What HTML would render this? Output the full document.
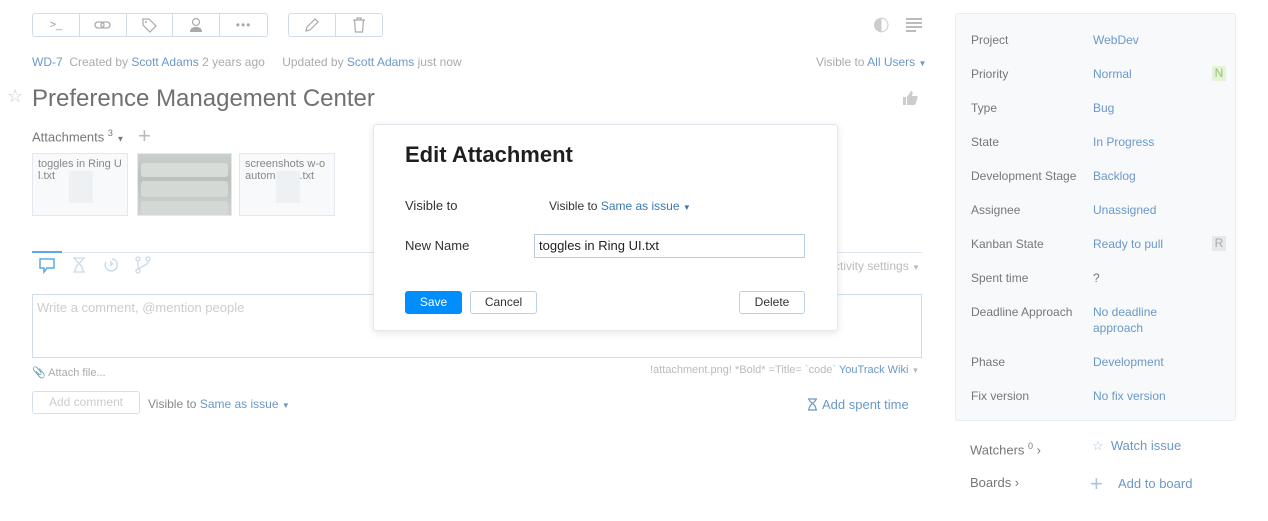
<!DOCTYPE html>
<html><head><meta charset="utf-8"><style>
*{box-sizing:border-box;margin:0;padding:0}
body{width:1268px;height:521px;background:#fff;font-family:"Liberation Sans",sans-serif;font-size:12px;color:#737373;position:relative;overflow:hidden}
.a{position:absolute;white-space:nowrap}
.blue{color:#6b98c8}
.lt{color:#aaa}
.grp{position:absolute;top:13px;height:24px;border:1px solid #cfdceb;border-radius:3px;display:flex}
.grp div{width:47px;height:22px;border-right:1px solid #cfdceb;display:flex;align-items:center;justify-content:center}
.grp div:last-child{border-right:none}
.thumb{position:absolute;top:153px;height:63px;border:1px solid #e3e8ee;background:#f7f9fb;font-size:11px;color:#888;padding:4px 5px;line-height:12px;white-space:normal}
.side{position:absolute;left:955px;top:13px;width:281px;height:408px;background:#f7f9fb;border:1px solid #e6ecf2;border-radius:3px}
.btn{position:absolute;height:23px;border:1px solid #bcd0e4;border-radius:3px;background:#fff;text-align:center;line-height:21px;color:#333}
.l{position:absolute;left:971px;color:#777;white-space:nowrap}
.v{position:absolute;left:1093px;color:#6b98c8;white-space:nowrap;line-height:16px}
</style></head><body>
<div class="grp" style="left:32px;width:236px">
<div><span style="color:#999;font-size:11px">&gt;_</span></div>
<div><svg width="18" height="12" viewBox="0 0 18 12"><rect x="1" y="3" width="9" height="6" rx="3" fill="none" stroke="#aaa" stroke-width="1.3"/><rect x="7" y="3" width="9" height="6" rx="3" fill="none" stroke="#aaa" stroke-width="1.3"/></svg></div>
<div><svg width="16" height="16" viewBox="0 0 16 16"><path d="M2 2h6l7 7-6 6-7-7z" fill="none" stroke="#aaa" stroke-width="1.2"/><circle cx="5" cy="5" r="1" fill="#aaa"/></svg></div>
<div><svg width="14" height="16" viewBox="0 0 14 16"><circle cx="7" cy="5" r="3.5" fill="none" stroke="#aaa" stroke-width="1.2"/><path d="M1 15c0-4 3-5 6-5s6 1 6 5z" fill="#aaa"/></svg></div>
<div><span style="color:#aaa;letter-spacing:1px;font-size:12px">•••</span></div>
</div>
<div class="grp" style="left:288px;width:95px">
<div><svg width="16" height="16" viewBox="0 0 16 16"><path d="M2 14l1-4 8-8 3 3-8 8z" fill="none" stroke="#aaa" stroke-width="1.2"/></svg></div>
<div><svg width="14" height="16" viewBox="0 0 14 16"><path d="M1 3h12M5 3V1h4v2M2.5 3l1 12h7l1-12" fill="none" stroke="#aaa" stroke-width="1.2"/></svg></div>
</div>
<svg class="a" style="left:873px;top:17px" width="16" height="16" viewBox="0 0 16 16"><circle cx="8" cy="8" r="7" fill="#ccc"/><path d="M8 1a7 7 0 0 1 0 14z" fill="#fff" stroke="#ccc"/></svg>
<svg class="a" style="left:906px;top:18px" width="16" height="14"><g fill="#bbb"><rect y="0" width="16" height="2"/><rect y="4" width="16" height="2"/><rect y="8" width="16" height="2"/><rect y="12" width="10" height="2"/></g></svg>

<div class="a" style="left:32px;top:55px;font-size:12px"><span class="blue">WD-7</span> <span class="lt">&nbsp;Created by</span> <span class="blue">Scott Adams</span> <span class="lt">2 years ago</span> <span class="lt" style="margin-left:14px">Updated by</span> <span class="blue">Scott Adams</span> <span class="lt">just now</span></div>
<div class="a" style="left:816px;top:55px"><span class="lt">Visible to</span> <span class="blue">All Users <span style="font-size:8px">▼</span></span></div>
<div class="a" style="left:7px;top:86px;font-size:18px;color:#ccc">☆</div>
<div class="a" style="left:32px;top:85px;font-size:24px;color:#707070">Preference Management Center</div>
<svg class="a" style="left:902px;top:90px" width="16" height="16" viewBox="0 0 16 16"><rect x="1" y="7" width="3" height="8" fill="#ccc"/><path d="M5 7l4-6c1 0 2 1 1.5 3L10 6h4.5c1 0 1.5 1 1 2l-2 6c-.3.7-1 1-1.5 1H5z" fill="#ccc"/></svg>
<div class="a" style="left:32px;top:128px;font-size:13px;color:#777">Attachments <sup style="font-size:9px">3</sup> <span style="font-size:8px">▼</span></div>
<div class="a" style="left:138px;top:123px;font-size:22px;color:#bbb">+</div>
<div class="thumb" style="left:32px;width:96px">toggles in Ring U l.txt<div style="position:absolute;left:36px;top:17px;width:24px;height:32px;background:#eef1f4"></div></div>
<div class="thumb" style="left:137px;width:95px;background:linear-gradient(180deg,#c9d0cb,#b9c2bc 40%,#cfd3d0);padding:0"><div style="margin:9px 3px 0;height:14px;background:#d8dcd9;border-radius:3px"></div><div style="margin:4px 3px 0;height:16px;background:#d5d9d6;border-radius:3px"></div><div style="margin:4px 3px 0;height:14px;background:#d5d9d6;border-radius:3px"></div></div>
<div class="thumb" style="left:239px;width:96px">screenshots w-o automation.txt<div style="position:absolute;left:36px;top:17px;width:24px;height:32px;background:#eef1f4"></div></div>

<div class="a" style="left:32px;top:252px;width:890px;height:1px;background:#dce6f0"></div>
<div class="a" style="left:32px;top:251px;width:30px;height:2px;background:#5aa9e6"></div>
<svg class="a" style="left:38px;top:257px" width="18" height="17" viewBox="0 0 18 17"><path d="M2 2h14v9H9l-3 4v-4H2z" fill="none" stroke="#5aa9e6" stroke-width="1.5"/></svg>
<svg class="a" style="left:72px;top:257px" width="14" height="16" viewBox="0 0 14 16"><path d="M1 1h12M1 15h12M3 1c0 5 8 5 8 14M11 1c0 5-8 5-8 14" fill="none" stroke="#c8daea" stroke-width="1.3"/></svg>
<svg class="a" style="left:103px;top:257px" width="16" height="16" viewBox="0 0 16 16"><path d="M9 2a6 6 0 1 1-6 3" fill="none" stroke="#c8daea" stroke-width="1.4"/><path d="M8 4v4l2-2" fill="none" stroke="#c8daea" stroke-width="1.3"/></svg>
<svg class="a" style="left:135px;top:256px" width="16" height="18" viewBox="0 0 16 18"><circle cx="3" cy="3" r="2" fill="none" stroke="#c8daea" stroke-width="1.3"/><circle cx="13" cy="3" r="2" fill="none" stroke="#c8daea" stroke-width="1.3"/><circle cx="3" cy="15" r="2" fill="none" stroke="#c8daea" stroke-width="1.3"/><path d="M3 5v8M13 5c0 5-6 4-9 8" fill="none" stroke="#c8daea" stroke-width="1.3"/></svg>
<div class="a lt" style="left:826px;top:259px;color:#bbb">Activity settings <span style="font-size:8px">▼</span></div>
<div class="a" style="left:32px;top:294px;width:890px;height:64px;border:1px solid #cfdceb"></div>
<div class="a" style="left:37px;top:300px;font-size:13px;color:#ccc">Write a comment, @mention people</div>
<div class="a" style="left:32px;top:366px;font-size:11px;color:#aaa">📎 Attach file...</div>
<div class="a" style="left:650px;top:364px;font-size:11px;color:#bbb">!attachment.png! *Bold* =Title= `code` <span class="blue">YouTrack Wiki</span> <span style="font-size:8px">▼</span></div>
<div class="btn" style="left:32px;top:391px;width:108px;border-color:#d2e0ee;color:#ccc">Add comment</div>
<div class="a" style="left:148px;top:397px;color:#888">Visible to <span class="blue">Same as issue <span style="font-size:8px">▼</span></span></div>
<svg class="a" style="left:807px;top:398px" width="11" height="13" viewBox="0 0 11 13"><path d="M1 1h9M1 12h9M2 1c0 4 7 4 7 11M9 1c0 4-7 4-7 11" fill="none" stroke="#6b98c8" stroke-width="1.2"/></svg>
<div class="a blue" style="left:822px;top:397px;font-size:13px">Add spent time</div>

<div class="side"></div>
<div class="l" style="top:33px">Project</div><div class="v" style="top:32px">WebDev</div>
<div class="l" style="top:67px">Priority</div><div class="v" style="top:66px">Normal</div>
<div class="l" style="top:101px">Type</div><div class="v" style="top:100px">Bug</div>
<div class="l" style="top:135px">State</div><div class="v" style="top:134px">In Progress</div>
<div class="l" style="top:169px">Development Stage</div><div class="v" style="top:168px">Backlog</div>
<div class="l" style="top:203px">Assignee</div><div class="v" style="top:202px">Unassigned</div>
<div class="l" style="top:237px">Kanban State</div><div class="v" style="top:236px">Ready to pull</div>
<div class="l" style="top:271px">Spent time</div><div class="v" style="top:270px;color:#777">?</div>
<div class="l" style="top:305px">Deadline Approach</div><div class="v" style="top:304px">No deadline<br>approach</div>
<div class="l" style="top:355px">Phase</div><div class="v" style="top:354px">Development</div>
<div class="l" style="top:389px">Fix version</div><div class="v" style="top:388px">No fix version</div>
<div class="a" style="left:1212px;top:66px;width:14px;height:15px;background:#e4f4d8;color:#9bc074;text-align:center;line-height:15px">N</div>
<div class="a" style="left:1212px;top:236px;width:14px;height:15px;background:#e6e8ea;color:#aaa;text-align:center;line-height:15px">R</div>
<div class="a" style="left:970px;top:441px;font-size:13px;color:#777">Watchers <sup style="font-size:9px">0</sup> ›</div>
<div class="a blue" style="left:1092px;top:438px;font-size:13px"><span style="color:#aac4dc">☆</span>&nbsp;&nbsp;Watch issue</div>
<div class="a" style="left:970px;top:475px;font-size:13px;color:#777">Boards ›</div>
<div class="a" style="left:1090px;top:471px;font-size:22px;color:#aac4dc">+</div>
<div class="a blue" style="left:1118px;top:476px;font-size:13px">Add to board</div>

<div class="a" style="left:373px;top:124px;width:465px;height:207px;background:#fff;border:1px solid #e3e8ee;border-radius:3px;box-shadow:0 2px 8px rgba(0,0,0,.1)"></div>
<div class="a" style="left:405px;top:142px;font-size:22px;font-weight:bold;color:#1f1f1f">Edit Attachment</div>
<div class="a" style="left:405px;top:198px;font-size:13px;color:#333">Visible to</div>
<div class="a" style="left:549px;top:199px;color:#333">Visible to <span style="color:#3a78b5">Same as issue <span style="font-size:8px">▼</span></span></div>
<div class="a" style="left:405px;top:238px;font-size:13px;color:#333">New Name</div>
<div class="a" style="left:534px;top:234px;width:271px;height:24px;border:1px solid #b8cde2;padding:3px 4px;font-size:13px;color:#222">toggles in Ring UI.txt</div>
<div class="btn" style="left:405px;top:291px;width:57px;background:#008eff;border-color:#008eff;color:#fff">Save</div>
<div class="btn" style="left:470px;top:291px;width:67px">Cancel</div>
<div class="btn" style="left:739px;top:291px;width:66px">Delete</div>
</body></html>
